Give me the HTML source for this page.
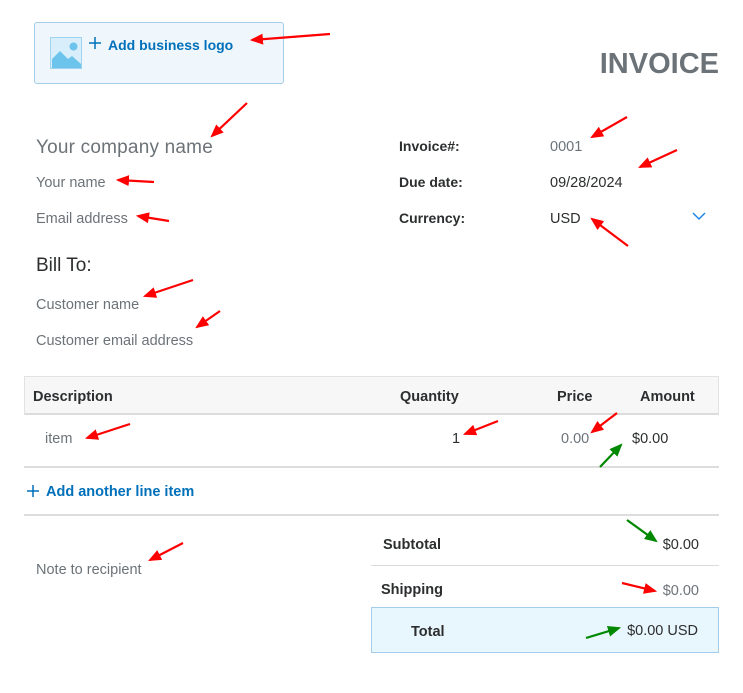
<!DOCTYPE html>
<html><head><meta charset="utf-8"><style>
*{margin:0;padding:0;box-sizing:border-box}
body{width:743px;height:693px;background:#fff;position:relative;overflow:hidden;font-family:"Liberation Sans",sans-serif;color:#2c2e2f}
.t{position:absolute;white-space:nowrap;line-height:18px;font-size:14.5px;letter-spacing:0;margin-top:1px}
.g{color:#6c7378}
.b{font-weight:bold}
.blue{color:#0070ba;font-weight:bold}
.line{position:absolute;height:2px;background:#dcdcdc}
</style></head><body>
<div style="position:absolute;left:34px;top:22px;width:250px;height:62px;background:#f0f7fc;border:1px solid #a3cde8;border-radius:3px"></div>
<svg style="position:absolute;left:50px;top:37px" width="33" height="33" viewBox="0 0 33 33">
<rect x="0.5" y="0.5" width="31" height="31" fill="#d8eefa" stroke="#9fd3f0"/>
<circle cx="23.5" cy="9.5" r="4" fill="#6cc3ec"/>
<path d="M2 31 L2 22 L10 14 L18 22 L22 19 L31 27 L31 31 Z" fill="#6cc3ec"/>
</svg>
<svg style="position:absolute;left:89px;top:37px" width="12" height="12" viewBox="0 0 12 12"><path d="M6 0V12M0 6H12" stroke="#0070ba" stroke-width="1.5"/></svg>
<div class="t blue" style="left:108px;top:35px;font-size:14px">Add business logo</div>
<div class="t b" style="right:24px;top:46px;font-size:29px;line-height:34px;color:#6c7378">INVOICE</div>

<div class="t g" style="left:36px;top:137px;font-size:19px;line-height:20px;letter-spacing:0.2px">Your company name</div>
<div class="t g" style="left:36px;top:173px;font-size:14.5px">Your name</div>
<div class="t g" style="left:36px;top:209px;font-size:14.5px">Email address</div>
<div class="t" style="left:36px;top:254px;font-size:19px;line-height:22px">Bill To:</div>
<div class="t g" style="left:36px;top:295px;font-size:14.5px">Customer name</div>
<div class="t g" style="left:36px;top:331px;font-size:14.5px">Customer email address</div>

<div class="t b" style="left:399px;top:136px;font-size:14px">Invoice#:</div>
<div class="t b" style="left:399px;top:172px;font-size:14px">Due date:</div>
<div class="t b" style="left:399px;top:208px;font-size:14px">Currency:</div>
<div class="t g" style="left:550px;top:137px;font-size:14.5px">0001</div>
<div class="t" style="left:550px;top:173px;font-size:14.5px">09/28/2024</div>
<div class="t" style="left:550px;top:209px;font-size:14.5px">USD</div>
<svg style="position:absolute;left:692px;top:212px" width="14" height="9" viewBox="0 0 14 9"><path d="M1 1 L7 7 L13 1" fill="none" stroke="#1e88e5" stroke-width="1.5"/></svg>

<div style="position:absolute;left:24px;top:376px;width:695px;height:39px;background:#f7f7f7;border:1px solid #e2e2e2;border-bottom:2px solid #dcdcdc"></div>
<div class="t b" style="left:33px;top:387px">Description</div>
<div class="t b" style="left:400px;top:387px">Quantity</div>
<div class="t b" style="left:557px;top:387px">Price</div>
<div class="t b" style="left:640px;top:387px">Amount</div>
<div class="t g" style="left:45px;top:429px">item</div>
<div class="t" style="left:452px;top:429px">1</div>
<div class="t g" style="left:561px;top:429px">0.00</div>
<div class="t" style="left:632px;top:429px">$0.00</div>
<div class="line" style="left:24px;top:466px;width:695px"></div>
<svg style="position:absolute;left:27px;top:485px" width="12" height="12" viewBox="0 0 12 12"><path d="M6 0V12M0 6H12" stroke="#0070ba" stroke-width="1.5"/></svg>
<div class="t blue" style="left:46px;top:482px;font-size:14.5px">Add another line item</div>
<div class="line" style="left:24px;top:514px;width:695px"></div>

<div class="t g" style="left:36px;top:560px">Note to recipient</div>
<div class="t b" style="left:383px;top:535px">Subtotal</div>
<div class="t" style="right:44px;top:535px">$0.00</div>
<div style="position:absolute;left:371px;top:565px;width:348px;height:1px;background:#dcdcdc"></div>
<div class="t b" style="left:381px;top:580px">Shipping</div>
<div class="t g" style="right:44px;top:581px">$0.00</div>
<div style="position:absolute;left:371px;top:607px;width:348px;height:46px;background:#e8f6fd;border:1px solid #a3cde8"></div>
<div class="t b" style="left:411px;top:622px">Total</div>
<div class="t" style="right:45px;top:621px">$0.00 USD</div>

<svg style="position:absolute;left:0;top:0" width="743" height="693">
<defs>
<marker id="r" markerWidth="6" markerHeight="5" refX="5" refY="2.5" orient="auto" markerUnits="strokeWidth"><path d="M0 0 L6 2.5 L0 5 Z" fill="#f00"/></marker>
<marker id="gm" markerWidth="6" markerHeight="5" refX="5" refY="2.5" orient="auto" markerUnits="strokeWidth"><path d="M0 0 L6 2.5 L0 5 Z" fill="#080"/></marker>
</defs>
<g stroke="#f00" stroke-width="2.2" marker-end="url(#r)">
<line x1="330" y1="34" x2="252" y2="40"/>
<line x1="247" y1="103" x2="212" y2="136"/>
<line x1="154" y1="182" x2="118" y2="180"/>
<line x1="169" y1="221" x2="138" y2="216"/>
<line x1="193" y1="280" x2="145" y2="296"/>
<line x1="220" y1="311" x2="197" y2="327"/>
<line x1="130" y1="424" x2="87" y2="438"/>
<line x1="183" y1="543" x2="150" y2="560"/>
<line x1="627" y1="117" x2="592" y2="137"/>
<line x1="677" y1="150" x2="640" y2="167"/>
<line x1="628" y1="246" x2="592" y2="219"/>
<line x1="498" y1="421" x2="465" y2="434"/>
<line x1="617" y1="413" x2="592" y2="432"/>
<line x1="622" y1="583" x2="655" y2="591"/>
</g>
<g stroke="#080" stroke-width="2.2" marker-end="url(#gm)">
<line x1="600" y1="467" x2="621" y2="445"/>
<line x1="627" y1="520" x2="656" y2="541"/>
<line x1="586" y1="638" x2="619" y2="628"/>
</g>
</svg>
</body></html>
